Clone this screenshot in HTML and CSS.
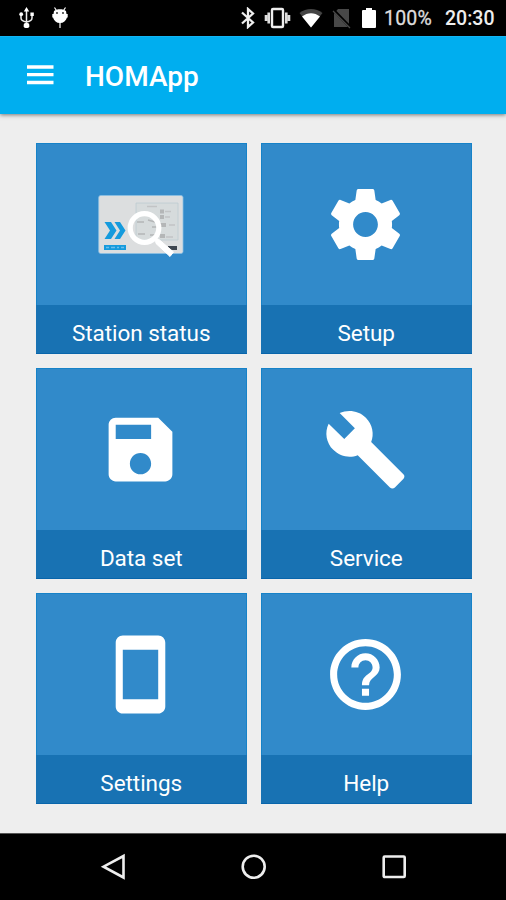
FILE: index.html
```html
<!DOCTYPE html>
<html lang="en">
<head>
<meta charset="utf-8">
<title>HOMApp</title>
<link rel="stylesheet" href="styles.css">
</head>
<body>
<div class="statusbar">
  <svg class="usb" width="16" height="22" viewBox="0 0 16 22"><path d="M7.500 3v15M2 8v3c0 2.500 2 3.500 5.500 4M13 8v3c0 2.500-2 3.500-5.500 4" fill="none" stroke="#eee" stroke-width="1.500"/><path d="M7.500 0l2.700 4.500H4.800zM11.400 5.500h3.400v3.400h-3.400z"/><circle cx="2.200" cy="7.200" r="1.900"/><rect x="4.700" y="16" width="5.600" height="5" rx="1.800"/></svg>
  <svg class="droid" width="16" height="22" viewBox="0 0 16 22"><path d="M2.500.5l2 3M13.500.5l-2 3M8 15v6" stroke="#fff" stroke-width="1.200"/><path d="M2 4C4.800 1.600 11.200 1.600 14 4L14.500 7H15.700V10.500H15C14 14 11.500 16 8 16S2 14 1 10.500H.3V7h1.200z"/><circle cx="5" cy="6" r=".9" fill="#222"/><circle cx="11" cy="6" r=".9" fill="#222"/></svg>
  <div class="tray">
    <svg class="bt" width="14" height="22" viewBox="0 0 14 22"><path d="M1 5.500l11 10-5 4.500V2l5 4.500-11 10" fill="none" stroke="#eee" stroke-width="2.300"/></svg>
    <svg class="vib" width="27" height="22" viewBox="0 0 27 22"><rect x="8" y="2" width="11" height="18" rx="1" fill="none" stroke="#eee" stroke-width="2.400"/><path d="M4.700 5.500v11M22.300 5.500v11M2 8v6M25 8v6" stroke="#ddd" stroke-width="2.600"/></svg>
    <svg class="wifi" width="24" height="21" viewBox="0 0 24 21"><path d="M.5 5C7-.5 17-.5 23.500 5L12 19.500z" fill="#444"/><path d="M3 8.500C8.500 4 15.500 4 21 8.500L12 19.500z"/></svg>
    <svg class="sim" width="20" height="21" viewBox="0 0 20 21"><path d="M6 1h11v18H2V5.500z" fill="#484848"/><path d="M1 1.500l17 17.500" stroke="#000" stroke-width="3"/><path d="M1 3l17 17" stroke="#484848" stroke-width="1.300"/></svg>
    <svg class="bat" width="14" height="21" viewBox="0 0 14 21"><path d="M4 0h6v2h3q1 0 1 1v16q0 1-1 1H1q-1 0-1-1V3q0-1 1-1h3z"/></svg>
    <span class="percent">100%</span>
    <span class="clock">20:30</span>
  </div>
</div>
<header class="appbar">
  <svg class="menu" width="27" height="21" viewBox="0 0 27 21"><path d="M0 3h26.500M0 10.700h26.500M0 18.500h26.500" stroke="#fff" stroke-width="3.300"/></svg>
  <h1 class="title">HOMApp</h1>
</header>
<main class="grid">
  <a class="tile"><span class="art">
    <svg class="station" width="86" height="64" viewBox="0 0 86 64"><rect x=".7" y=".5" width="84.300" height="58" rx="2" fill="#dcdedf" stroke="#8abfe2" stroke-width=".8"/>
      <path d="M38 8h42v37H38z" fill="#d6dbdc" stroke="#bdcbd0" stroke-width=".8"/>
      <path d="M49 11.500h10M67 16.500h6M67 22h5M71 30h6M68 42h7" stroke="#c2c4c5" stroke-width="1.300"/>
      <path d="M62 14.500h4v4h-4zM62 20h4v4h-4zM62 28h6v4h-6zM62 39h5v4h-5z" fill="#b4b6b7"/>
      <path d="M39 27h7M40 39h7M50 25l7 2M52 40h5M54 32h5" stroke="#b4b6b7" stroke-width="1.600"/>
      <path d="M6.500 27H13l5.500 8.500L13 44H6.500l5.500-8.500zM16.500 27H22l5.500 8.500L22 44h-5.500l5.500-8.500z" fill="#159bdd"/>
      <path d="M6 50h22v5H6z" fill="#159bdd"/><path d="M8 52.500h3M13 52.500h4M19 52.500h2M23 52.500h3" stroke="#6cbdea" stroke-width="1.600"/><path d="M70 51h9v4h-9z" fill="#3e4650"/>
      <circle cx="46.500" cy="33" r="14.300" fill="none" stroke="#fff" stroke-width="5.200"/><path d="M57 43l4 1.500L75.500 57 72 61.500 58 48.500z" stroke="#fff"/></svg></span><span class="label">Station status</span></a>
  <a class="tile"><span class="art">
    <svg width="85" height="85" viewBox="0 0 24 24"><path d="M19.430 12.980c.04-.32.07-.64.07-.98s-.03-.66-.07-.98l2.110-1.650c.19-.15.24-.42.12-.64l-2-3.460c-.12-.22-.39-.3-.61-.22l-2.490 1c-.52-.4-1.080-.73-1.690-.98l-.38-2.650C14.460 2.180 14.250 2 14 2h-4c-.25 0-.46.18-.49.42l-.38 2.650c-.61.25-1.170.59-1.690.98l-2.490-1c-.23-.09-.49 0-.61.22l-2 3.460c-.13.22-.07.49.12.64l2.110 1.650c-.04.32-.07.65-.07.98s.03.66.07.98l-2.110 1.650c-.19.15-.24.42-.12.64l2 3.460c.12.22.39.3.61.22l2.490-1c.52.4 1.080.73 1.690.98l.38 2.650c.03.24.24.42.49.42h4c.25 0 .46-.18.49-.42l.38-2.650c.61-.25 1.170-.59 1.690-.98l2.490 1c.23.09.49 0 .61-.22l2-3.460c.12-.22.07-.49-.12-.64zM12 15.500c-1.930 0-3.500-1.570-3.500-3.500s1.570-3.500 3.500-3.500 3.500 1.570 3.500 3.500-1.570 3.500-3.500 3.500z"/></svg></span><span class="label">Setup</span></a>
  <a class="tile"><span class="art">
    <svg width="85" height="85" viewBox="0 0 24 24"><path d="M17 3H5c-1.110 0-2 .9-2 2v14c0 1.100.89 2 2 2h14c1.100 0 2-.9 2-2V7zM12 19c-1.660 0-3-1.340-3-3s1.340-3 3-3 3 1.340 3 3-1.340 3-3 3zM15 9H5V5h10z"/></svg></span><span class="label">Data set</span></a>
  <a class="tile"><span class="art">
    <svg width="85" height="85" viewBox="0 0 24 24"><path d="M22.700 19l-9.100-9.100c.9-2.300.4-5-1.500-6.900-2-2-5-2.400-7.400-1.300L9 6 6 9 1.600 4.700C.4 7.100.9 10.100 2.900 12.100c1.900 1.900 4.600 2.400 6.900 1.500l9.100 9.100c.4.4 1 .4 1.400 0l2.300-2.300c.5-.4.5-1.100.1-1.400z"/></svg></span><span class="label">Service</span></a>
  <a class="tile"><span class="art">
    <svg width="85" height="85" viewBox="0 0 24 24"><path d="M17 1H7c-1.100 0-2 .9-2 2v18c0 1.100.9 2 2 2h10c1.100 0 2-.9 2-2V3c0-1.100-.9-2-2-2zM17 19H7V5h10z"/></svg></span><span class="label">Settings</span></a>
  <a class="tile"><span class="art">
    <svg width="85" height="85" viewBox="0 0 24 24"><path d="M11 18h2v-2h-2zM12 2C6.480 2 2 6.480 2 12s4.480 10 10 10 10-4.480 10-10S17.520 2 12 2zM12 20c-4.410 0-8-3.590-8-8s3.590-8 8-8 8 3.590 8 8-3.590 8-8 8zM12 6c-2.210 0-4 1.790-4 4h2c0-1.100.9-2 2-2s2 .9 2 2c0 2-3 1.750-3 5h2c0-2.250 3-2.500 3-5 0-2.210-1.790-4-4-4z"/></svg></span><span class="label">Help</span></a>
</main>
<nav class="navbar">
  <svg width="28" height="28" viewBox="0 0 28 28"><path d="M23.500 3v21.500L3.500 13.700z"/></svg>
  <svg width="28" height="28" viewBox="0 0 28 28"><circle cx="13.700" cy="13.700" r="11"/></svg>
  <svg width="28" height="28" viewBox="0 0 28 28"><rect x="3.700" y="3.500" width="21" height="20.500" rx="1"/></svg>
</nav>
</body>
</html>
```
FILE: styles.css
```css
* { box-sizing: border-box; }
body {
  margin: 0;
  width: 506px;
  height: 900px;
  display: flex;
  flex-direction: column;
  background: #eee;
  color: #fff;
  font-family: Roboto, sans-serif;
  overflow: hidden;
}
svg { display: block; flex: none; fill: #fff; }
.statusbar {
  height: 36px;
  flex: none;
  display: flex;
  align-items: center;
  background: #000;
  padding: 0 11px 0 19px;
}
.droid { margin-left: 17px; }
.tray { display: flex; align-items: center; margin-left: auto; }
.vib { margin-left: 9px; }
.wifi { margin-left: 8px; }
.sim { margin-left: 9px; }
.bat { margin-left: 10px; }
.percent { width: 49px; margin-left: 8px; font-size: 19.5px; line-height: 36px; padding-top: 2px; color: #ddd; letter-spacing: .2px; white-space: nowrap; -webkit-text-stroke: .3px #ddd; }
.clock { width: 50px; margin-left: 12px; font-size: 19.5px; line-height: 36px; padding-top: 2px; font-weight: 500; color: #eee; white-space: nowrap; }
.appbar {
  height: 78px;
  flex: none;
  display: flex;
  align-items: center;
  padding: 0 27px 2px;
  background: #00aeef;
  border-top: 1px solid #12b5f5;
  box-shadow: 0 1px 4px rgba(0, 0, 0, .5);
}
.title { margin: 4px 0 0 31px; font-size: 28px; line-height: 34px; font-weight: 500; }
.grid {
  flex: none;
  display: grid;
  grid-template-columns: 210.500px 210.500px;
  grid-auto-rows: 211px;
  gap: 14px 14.500px;
  padding: 29px 0 0 36px;
}
.tile { display: flex; flex-direction: column; background: #318aca; border: solid #1682c8; border-width: 1px 1px 0; }
.art { flex: 1; display: flex; align-items: center; justify-content: center; padding: 0 1px 1px 0; }
.station { margin: 5px 0 0 1px; }
.label { height: 49px; margin: 0 -1px; padding-top: 9px; background: #1872b3; border-bottom: 1px solid #0865ab; font-size: 22.5px; line-height: 39px; text-align: center; letter-spacing: -.05px; }
.navbar {
  height: 67px;
  flex: none;
  margin-top: auto;
  display: flex;
  justify-content: space-between;
  align-items: center;
  padding: 0 98px 0 100px;
  background: #000;
  border-top: 1px solid #555;
}
.navbar svg { fill: none; stroke: #eee; stroke-width: 2.600; }
```
